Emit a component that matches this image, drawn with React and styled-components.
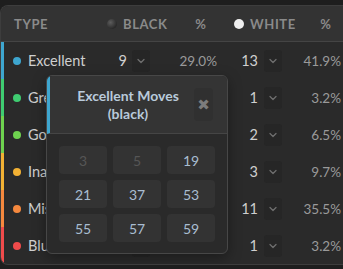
import React from 'react'
import styled, { createGlobalStyle } from 'styled-components'
import { ChevronDown } from 'lucide-react'

const GlobalStyle = createGlobalStyle`
  html, body {
    margin: 0;
    padding: 0;
    background: #1e1e1e;
    font-family: Lato, "Noto Sans", sans-serif;
    overflow: hidden;
  }
`

const rows = [
  { name: 'Excellent', color: '#3ea6cf', black: 9, bPct: '29.0%', white: 13, wPct: '41.9%' },
  { name: 'Great', color: '#3fcc71', black: 0, bPct: '', white: 1, wPct: '3.2%' },
  { name: 'Good', color: '#6fd24f', black: 0, bPct: '', white: 2, wPct: '6.5%' },
  { name: 'Inaccuracy', color: '#f2b134', black: 0, bPct: '', white: 3, wPct: '9.7%' },
  { name: 'Mistake', color: '#f5883e', black: 0, bPct: '', white: 11, wPct: '35.5%' },
  { name: 'Blunder', color: '#ef4b4b', black: 0, bPct: '', white: 1, wPct: '3.2%' },
]

const moves = [
  { n: 3, off: true },
  { n: 5, off: true },
  { n: 19 },
  { n: 21 },
  { n: 37 },
  { n: 53 },
  { n: 55 },
  { n: 57 },
  { n: 59 },
]

const Card = styled.div`
  position: relative;
  margin-top: 5px;
  width: 370px;
  height: 258px;
  border: 1px solid #3d3d3d;
  border-right: none;
  border-radius: 8px 0 0 8px;
  background: #2a2a2a;
  overflow: hidden;
`

const Head = styled.div`
  display: grid;
  grid-template-columns: 99px 80px 42px 88px 32px;
  align-items: center;
  height: 35px;
  background: #333333;
  border-bottom: 1px solid #444444;
  color: #8a8a8a;
  font-size: 13px;
  font-weight: 700;
  letter-spacing: 0.6px;
  text-transform: uppercase;
`

const HeadCell = styled.div`
  display: flex;
  align-items: center;
  justify-content: ${(p) => (p.$center ? 'center' : 'flex-start')};
  padding-left: ${(p) => p.$pad || 0}px;
  gap: 6px;
`

const Ball = styled.span`
  width: 10px;
  height: 10px;
  border-radius: 50%;
  background: ${(p) =>
    p.$white ? '#efefef' : 'radial-gradient(circle at 35% 35%, #5c5c5c, #262626 75%)'};
`

const Row = styled.div`
  display: grid;
  grid-template-columns: 96px 27px 28px 62px 41px 31px 52px;
  align-items: center;
  height: 37px;
  border-left: 3px solid ${(p) => p.$color};
  color: #cfcfcf;
  font-size: 14.5px;
`

const Label = styled.div`
  display: flex;
  align-items: center;
  gap: 7px;
  padding-left: 9px;
`

const Dot = styled.span`
  width: 8px;
  height: 8px;
  border-radius: 50%;
  background: ${(p) => p.$color};
`

const Count = styled.div`
  text-align: right;
`

const Chev = styled.div`
  display: flex;
  align-items: center;
  justify-content: center;
  width: 18px;
  height: 22px;
  margin-left: ${(p) => p.$gap}px;
  border-radius: 3px;
  background: #262626;
  color: #6f6f6f;
`

const Pct = styled.div`
  text-align: right;
  color: #9a9a9a;
  font-size: 13.5px;
`

const Popup = styled.div`
  position: absolute;
  left: 45px;
  top: 69px;
  width: 180px;
  border: 1px solid #474747;
  border-radius: 6px;
  background: #2a2a2a;
  overflow: hidden;
  box-shadow: 0 4px 14px rgba(0, 0, 0, 0.35);
`

const PopHead = styled.div`
  display: flex;
  align-items: center;
  height: 57px;
  padding: 0 14px 0 12px;
  border-left: 3px solid #3ea6cf;
  border-bottom: 1px solid #454545;
  background: #343434;
`

const Title = styled.div`
  flex: 1;
  text-align: center;
  color: #b9cadb;
  font-size: 14px;
  font-weight: 700;
  line-height: 18px;
`

const Close = styled.div`
  display: flex;
  align-items: center;
  justify-content: center;
  width: 19px;
  height: 33px;
  border-radius: 4px;
  background: #303030;
  color: #7c7c7c;
  font-family: "DejaVu Sans", sans-serif;
  font-size: 15px;
`

const Moves = styled.div`
  display: grid;
  grid-template-columns: repeat(3, 48px);
  grid-auto-rows: 28px;
  gap: 6px;
  padding: 12px 12px 11px 12px;
`

const Move = styled.div`
  display: flex;
  align-items: center;
  justify-content: center;
  border-radius: 4px;
  background: #333333;
  color: ${(p) => (p.$off ? '#565656' : '#a9bdd1')};
  font-size: 14px;
`

export default function App() {
  return (
    <>
      <GlobalStyle />
      <Card>
        <Head>
          <HeadCell $pad={13}>Type</HeadCell>
          <HeadCell $pad={7}>
            <Ball />
            Black
          </HeadCell>
          <HeadCell $center>%</HeadCell>
          <HeadCell $pad={12}>
            <Ball $white />
            White
          </HeadCell>
          <HeadCell $center>%</HeadCell>
        </Head>
        {rows.map((r) => (
          <Row key={r.name} $color={r.color}>
            <Label>
              <Dot $color={r.color} />
              {r.name}
            </Label>
            <Count>{r.black}</Count>
            <Chev $gap={5}>
              <ChevronDown size={12} strokeWidth={2.5} />
            </Chev>
            <Pct>{r.bPct}</Pct>
            <Count>{r.white}</Count>
            <Chev $gap={6}>
              <ChevronDown size={12} strokeWidth={2.5} />
            </Chev>
            <Pct>{r.wPct}</Pct>
          </Row>
        ))}
        <Popup>
          <PopHead>
            <Title>
              Excellent Moves
              <br />
              (black)
            </Title>
            <Close>✖</Close>
          </PopHead>
          <Moves>
            {moves.map((m) => (
              <Move key={m.n} $off={m.off}>
                {m.n}
              </Move>
            ))}
          </Moves>
        </Popup>
      </Card>
    </>
  )
}
